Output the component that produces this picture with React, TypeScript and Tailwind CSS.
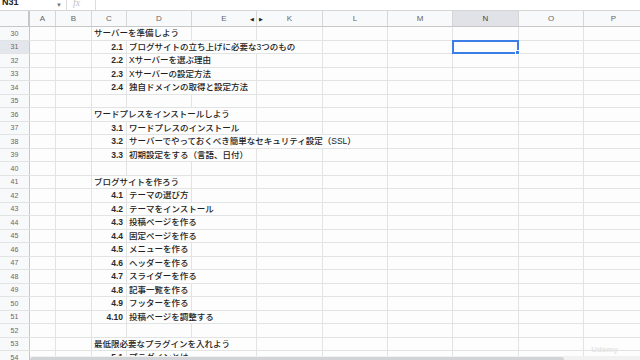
import React from 'react';

type Col = { key: string; w: number };

const cols: Col[] = [
  { key: 'A', w: 26 },
  { key: 'B', w: 36 },
  { key: 'C', w: 35 },
  { key: 'D', w: 65 },
  { key: 'E', w: 65 },
  { key: 'K', w: 66 },
  { key: 'L', w: 65 },
  { key: 'M', w: 65 },
  { key: 'N', w: 66 },
  { key: 'O', w: 65 },
  { key: 'P', w: 60 },
];

type Cell = { col: string; span: number; text: string; num?: boolean };

const row = (n: number, cells: Cell[] = []) => ({ n, cells });
const head = (n: number, text: string, span: number) => row(n, [{ col: 'C', span, text }]);
const item = (n: number, num: string, text: string, span: number) =>
  row(n, [
    { col: 'C', span: 1, text: num, num: true },
    { col: 'D', span, text },
  ]);

const rows = [
  head(30, 'サーバーを準備しよう', 2),
  item(31, '2.1', 'ブログサイトの立ち上げに必要な3つのもの', 3),
  item(32, '2.2', 'Xサーバーを選ぶ理由', 2),
  item(33, '2.3', 'Xサーバーの設定方法', 2),
  item(34, '2.4', '独自ドメインの取得と設定方法', 2),
  row(35),
  head(36, 'ワードプレスをインストールしよう', 3),
  item(37, '3.1', 'ワードプレスのインストール', 2),
  item(38, '3.2', 'サーバーでやっておくべき簡単なセキュリティ設定（SSL）', 4),
  item(39, '3.3', '初期設定をする（言語、日付）', 2),
  row(40),
  head(41, 'ブログサイトを作ろう', 2),
  item(42, '4.1', 'テーマの選び方', 1),
  item(43, '4.2', 'テーマをインストール', 2),
  item(44, '4.3', '投稿ページを作る', 2),
  item(45, '4.4', '固定ページを作る', 2),
  item(46, '4.5', 'メニューを作る', 1),
  item(47, '4.6', 'ヘッダーを作る', 1),
  item(48, '4.7', 'スライダーを作る', 2),
  item(49, '4.8', '記事一覧を作る', 1),
  item(50, '4.9', 'フッターを作る', 1),
  item(51, '4.10', '投稿ページを調整する', 2),
  row(52),
  head(53, '最低限必要なプラグインを入れよう', 3),
  item(54, '5.1', 'プラグインとは', 2),
];

function SheetRow({ n, cells }: { n: number; cells: Cell[] }) {
  const out: React.ReactNode[] = [];
  for (let i = 0; i < cols.length; i++) {
    const c = cols[i];
    const cell = cells.find(x => x.col === c.key);
    const selected = n === 31 && c.key === 'N';
    if (cell) {
      const w = cols.slice(i, i + cell.span).reduce((s, x) => s + x.w, 0);
      out.push(
        <div
          key={c.key}
          style={{ width: w }}
          className={`shrink-0 h-full border-r border-[#e2e3e3] flex items-center whitespace-nowrap overflow-hidden ${
            cell.num
              ? "justify-end pr-[3px] font-bold text-[#2b2b2b] font-['Liberation_Sans',sans-serif]"
              : "pl-[2px] font-medium text-[#222] font-['Liberation_Sans','Noto_Sans_CJK_JP',sans-serif]"
          }`}
        >
          {cell.text}
        </div>
      );
      i += cell.span - 1;
    } else {
      out.push(
        <div
          key={c.key}
          style={{ width: c.w }}
          className={`shrink-0 h-full border-r border-[#e2e3e3] ${selected ? 'relative' : ''}`}
        >
          {selected && (
            <div className="absolute -left-px -top-px -right-px -bottom-px border-2 border-[#3b7fe6] z-10">
              <div className="absolute -right-[3px] -bottom-[3px] w-[5px] h-[5px] bg-[#3b7fe6] border border-white" />
            </div>
          )}
        </div>
      );
    }
  }
  return (
    <div className="flex h-[13.5px] shrink-0 border-b border-[#e2e3e3] text-[8.5px] leading-none">
      <div
        className={`w-[30px] shrink-0 h-full flex items-center justify-center border-r border-[#c7c7c7] text-[7px] text-[#666] font-['Liberation_Sans',sans-serif] ${
          n === 31 ? 'bg-[#e3e6ec]' : 'bg-[#f8f9fa]'
        }`}
      >
        {n}
      </div>
      {out}
    </div>
  );
}

export default function App() {
  return (
    <div className="relative w-[640px] h-[360px] overflow-hidden bg-[#fdfdfd] flex flex-col">
      {/* Formula bar (cut at top) */}
      <div className="h-[11px] shrink-0 flex items-start border-b border-[#d6d6d6] bg-white font-['Liberation_Sans',sans-serif]">
        <div className="w-[66px] h-full flex items-start justify-between pl-[2px] pr-[4px] -mt-[3px]">
          <span className="text-[9px] leading-[11px] font-bold text-[#222]">N31</span>
          <span className="text-[6px] text-[#777] mt-[4px]">▼</span>
        </div>
        <div className="w-px h-full bg-[#dcdcdc]" />
        <div className="w-[28px] h-full flex items-start pl-[6px] -mt-[3px]">
          <span className="text-[10px] leading-[11px] italic font-['Liberation_Serif',serif] text-[#c4c4c4]">fx</span>
        </div>
        <div className="w-px h-full bg-[#dcdcdc]" />
      </div>

      {/* Column headers */}
      <div className="flex h-[16px] shrink-0 bg-[#f8f9fa] border-b border-[#c7c7c7] text-[8px] text-[#666] font-['Liberation_Sans',sans-serif]">
        <div className="w-[30px] shrink-0 h-full border-r-2 border-[#c7c7c7]" />
        {cols.map(c => (
          <div
            key={c.key}
            style={{ width: c.w }}
            className={`relative shrink-0 h-full flex items-center justify-center border-r border-[#d6d6d6] ${
              c.key === 'N' ? 'bg-[#e1e2e7] text-[#444]' : ''
            }`}
          >
            {c.key}
            {c.key === 'E' && (
              <span className="absolute right-[2px] top-[5px] text-[5px] text-[#222]">◀</span>
            )}
            {c.key === 'K' && (
              <span className="absolute left-[2px] top-[5px] text-[5px] text-[#222]">▶</span>
            )}
          </div>
        ))}
      </div>

      {/* Rows */}
      {rows.map(r => (
        <SheetRow key={r.n} n={r.n} cells={r.cells} />
      ))}

      {/* Horizontal scrollbar */}
      <div className="absolute left-[30px] right-0 bottom-0 h-[4px] bg-[#f1f1f1]" />
      <div className="absolute left-[30px] bottom-0 w-[534px] h-[3px] rounded-t-sm bg-[#d2d3d7]" />

      {/* Watermark */}
      <div className="absolute right-[22px] bottom-[4px] text-[8px] font-bold text-[#e4e4e4] font-['Liberation_Sans',sans-serif]">
        Udemy
      </div>
    </div>
  );
}
